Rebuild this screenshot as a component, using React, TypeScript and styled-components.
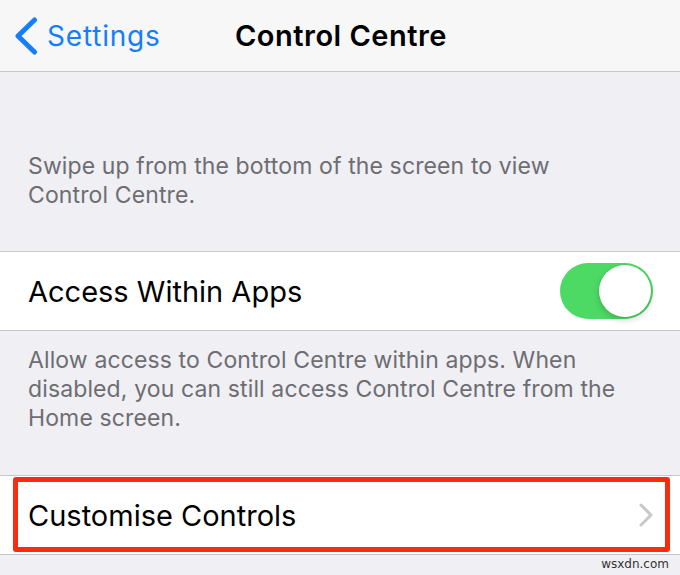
import * as React from "react";
import styled, { createGlobalStyle } from "styled-components";

const GlobalStyle = createGlobalStyle`
  html, body {
    margin: 0;
    padding: 0;
    background: #efeff4;
  }
  body {
    font-family: Inter, "Noto Sans", "Liberation Sans", sans-serif;
    -webkit-font-smoothing: antialiased;
  }
`;

const Page = styled.div`
  width: 680px;
  height: 575px;
  overflow: hidden;
  background: #efeff4;
  display: flex;
  flex-direction: column;
`;

const NavBar = styled.header`
  height: 71px;
  flex-shrink: 0;
  display: flex;
  align-items: center;
  background: #f7f7f7;
  border-bottom: 1px solid #c8c7cc;
  padding-left: 14px;
`;

const BackButton = styled.div`
  display: flex;
  align-items: center;
  gap: 9px;
  color: #157efb;
  font-size: 28px;
  letter-spacing: 0.8px;
  width: 221px;
`;

const Title = styled.h1`
  margin: 0;
  font-size: 29px;
  font-weight: 600;
  color: #000;
  letter-spacing: 0.5px;
`;

const SectionFooter = styled.p<{ $top: number; $bottom: number }>`
  margin: 0;
  padding: ${(p) => p.$top}px 20px ${(p) => p.$bottom}px 28px;
  font-size: 23px;
  line-height: 29px;
  letter-spacing: 0.12px;
  color: #6d6d72;
  white-space: nowrap;
`;

const Cell = styled.div`
  position: relative;
  height: 78px;
  flex-shrink: 0;
  display: flex;
  align-items: center;
  justify-content: space-between;
  background: #fff;
  border-top: 1px solid #c8c7cc;
  border-bottom: 1px solid #c8c7cc;
  padding: 0 27px 0 28px;
`;

const CellLabel = styled.span`
  font-size: 29px;
  color: #000;
`;

const Highlight = styled.div`
  position: absolute;
  top: 1px;
  left: 13px;
  right: 10px;
  bottom: 2px;
  border: 5px solid #fb2b0d;
  border-radius: 3px;
  pointer-events: none;
`;

const Toggle = styled.div<{ $on: boolean }>`
  position: relative;
  width: 93px;
  height: 56px;
  border-radius: 28px;
  background: ${(p) => (p.$on ? "#4cd964" : "#e5e5ea")};
`;

const Knob = styled.span<{ $on: boolean }>`
  position: absolute;
  top: 2px;
  left: ${(p) => (p.$on ? "39px" : "2px")};
  width: 52px;
  height: 52px;
  border-radius: 50%;
  background: #fff;
  box-shadow: 0 3px 6px rgba(0, 0, 0, 0.18), 0 0 0 0.5px rgba(0, 0, 0, 0.06);
`;

const Watermark = styled.div`
  display: flex;
  justify-content: flex-end;
  padding: 2px 11px 0 0;
  font-family: "DejaVu Sans", sans-serif;
  font-size: 12px;
  color: #333;
`;

const BackChevron = () => (
  <svg width="24" height="38" viewBox="0 0 24 38" fill="none">
    <polyline
      points="20.5,3 4,19 20.5,35"
      stroke="#157efb"
      strokeWidth="5"
      strokeLinecap="round"
      strokeLinejoin="round"
    />
  </svg>
);

const Disclosure = () => (
  <svg width="14" height="24" viewBox="0 0 14 24" fill="none">
    <polyline
      points="2,2 12,12 2,22"
      stroke="#c7c7cc"
      strokeWidth="3"
      strokeLinecap="round"
      strokeLinejoin="round"
    />
  </svg>
);

export default function App() {
  const [on, setOn] = React.useState(true);

  return (
    <Page>
      <GlobalStyle />
      <NavBar>
        <BackButton>
          <BackChevron />
          <span>Settings</span>
        </BackButton>
        <Title>Control Centre</Title>
      </NavBar>

      <SectionFooter $top={80} $bottom={41}>
        Swipe up from the bottom of the screen to view
        <br />
        Control Centre.
      </SectionFooter>

      <Cell>
        <CellLabel>Access Within Apps</CellLabel>
        <Toggle $on={on} onClick={() => setOn(!on)}>
          <Knob $on={on} />
        </Toggle>
      </Cell>

      <SectionFooter $top={15} $bottom={42}>
        Allow access to Control Centre within apps. When
        <br />
        disabled, you can still access Control Centre from the
        <br />
        Home screen.
      </SectionFooter>

      <Cell>
        <CellLabel>Customise Controls</CellLabel>
        <Disclosure />
        <Highlight />
      </Cell>

      <Watermark>wsxdn.com</Watermark>
    </Page>
  );
}
